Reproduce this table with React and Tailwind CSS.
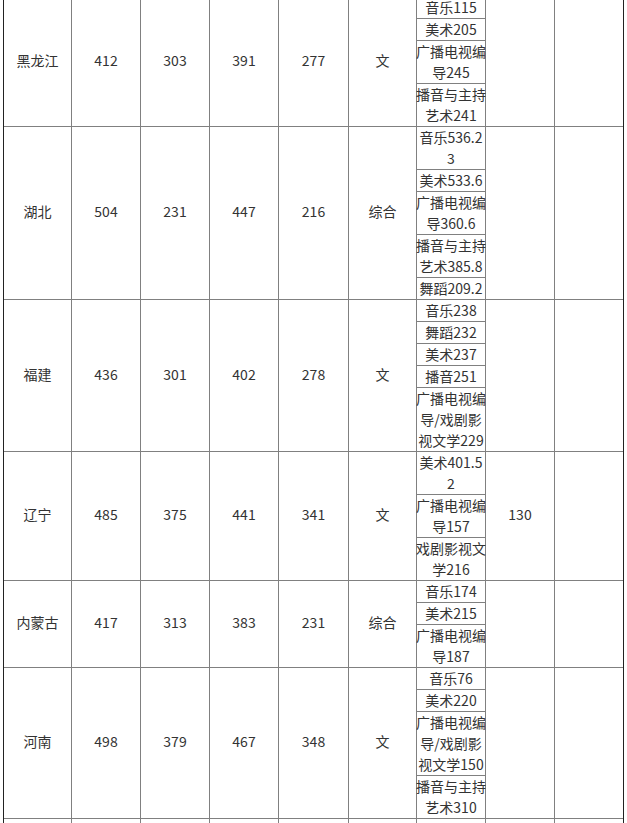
const SPAN = {
  1: 'row-span-1',
  2: 'row-span-2',
  3: 'row-span-3',
  4: 'row-span-4',
  5: 'row-span-5',
};

// 艺术类分数线：每条专业按实际换行写出
const ROWS = [
  {
    name: '黑龙江', a: '412', b: '303', c: '391', d: '277', type: '文',
    arts: [['音乐115'], ['美术205'], ['广播电视编', '导245'], ['播音与主持', '艺术241']],
    sport: '', extra: '',
  },
  {
    name: '湖北', a: '504', b: '231', c: '447', d: '216', type: '综合',
    arts: [['音乐536.2', '3'], ['美术533.6'], ['广播电视编', '导360.6'], ['播音与主持', '艺术385.8'], ['舞蹈209.2']],
    sport: '', extra: '',
  },
  {
    name: '福建', a: '436', b: '301', c: '402', d: '278', type: '文',
    arts: [['音乐238'], ['舞蹈232'], ['美术237'], ['播音251'], ['广播电视编', '导/戏剧影', '视文学229']],
    sport: '', extra: '',
  },
  {
    name: '辽宁', a: '485', b: '375', c: '441', d: '341', type: '文',
    arts: [['美术401.5', '2'], ['广播电视编', '导157'], ['戏剧影视文', '学216']],
    sport: '130', extra: '',
  },
  {
    name: '内蒙古', a: '417', b: '313', c: '383', d: '231', type: '综合',
    arts: [['音乐174'], ['美术215'], ['广播电视编', '导187']],
    sport: '', extra: '',
  },
  {
    name: '河南', a: '498', b: '379', c: '467', d: '348', type: '文',
    arts: [['音乐76'], ['美术220'], ['广播电视编', '导/戏剧影', '视文学150'], ['播音与主持', '艺术310']],
    sport: '', extra: '',
  },
  {
    name: '', a: '', b: '', c: '', d: '', type: '',
    arts: [[''], [''], ['']],
    sport: '', extra: '',
  },
];

function Cell({ span, children }) {
  return (
    <div className={`${SPAN[span]} bg-white flex items-center justify-center text-center pb-[3px]`}>
      {children}
    </div>
  );
}

function ArtCell({ lines }) {
  return (
    <div className="bg-white flex flex-col items-center justify-center whitespace-nowrap min-h-[21px]">
      {lines.map((l, k) => <span key={k}>{l}</span>)}
    </div>
  );
}

export default function App() {
  return (
    <div className="h-[823px] overflow-hidden bg-white">
      <div
        className="ml-[3px] w-[621px] border-x border-[#222] -mt-[3px] text-[14px] leading-[21px] text-[#333]"
        style={{ fontFamily: '"Noto Sans CJK SC", "Noto Sans", sans-serif' }}
      >
        <div className="grid grid-cols-[67px_68px_68px_68px_69px_67px_68px_68px_68px] gap-px bg-[#808080] pb-px">
          {ROWS.map((r, i) => {
            const n = r.arts.length;
            return [
              <Cell key={`${i}-n`} span={n}>{r.name}</Cell>,
              <Cell key={`${i}-a`} span={n}>{r.a}</Cell>,
              <Cell key={`${i}-b`} span={n}>{r.b}</Cell>,
              <Cell key={`${i}-c`} span={n}>{r.c}</Cell>,
              <Cell key={`${i}-d`} span={n}>{r.d}</Cell>,
              <Cell key={`${i}-t`} span={n}>{r.type}</Cell>,
              <ArtCell key={`${i}-art0`} lines={r.arts[0]} />,
              <Cell key={`${i}-s`} span={n}>{r.sport}</Cell>,
              <Cell key={`${i}-e`} span={n}>{r.extra}</Cell>,
              ...r.arts.slice(1).map((lines, j) => (
                <ArtCell key={`${i}-art${j + 1}`} lines={lines} />
              )),
            ];
          })}
        </div>
      </div>
    </div>
  );
}
